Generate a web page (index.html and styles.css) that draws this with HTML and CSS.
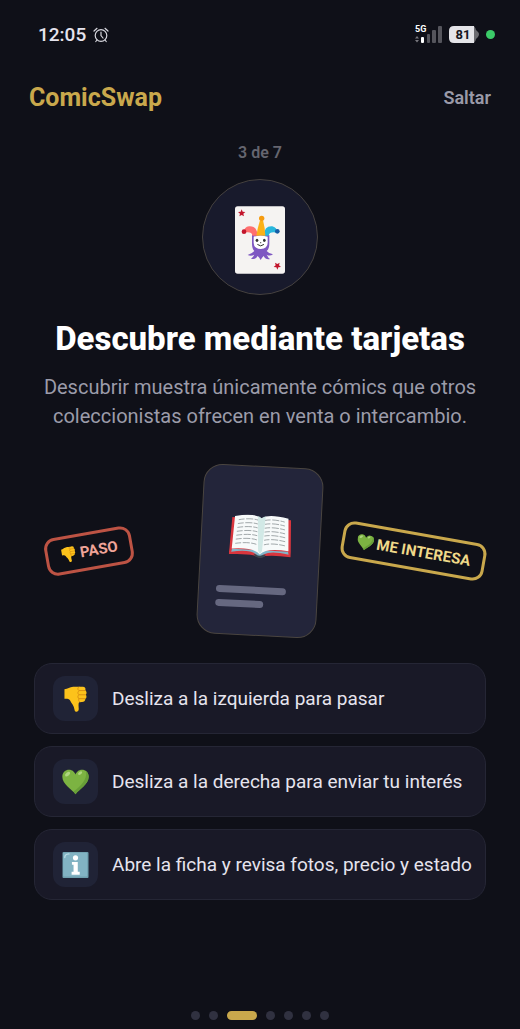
FILE: index.html
```html
<!DOCTYPE html>
<html lang="es">
<head>
    <meta charset="UTF-8">
    <meta name="viewport" content="width=device-width, initial-scale=1.0">
    <title>ComicSwap</title>
    <link rel="stylesheet" href="styles.css">
</head>
<body>
    <!-- shared icons -->
    <svg class="sprite" aria-hidden="true">
        <symbol id="thumb-down" viewBox="0 0 70 80">
            <path fill="#fcc21b" d="M1 10 C12 9 16 3 28 2 L58 2 C65 3 67 8 65 13 C70 17 70 23 67 27 C70 32 69 37 65 39 C66 45 62 49 55 49 L46 50 C43 56 45 65 45 71 C45 81 33 82 32 73 C31 61 22 53 18 44 C14 38 8 39 1 39 Z"/>
            <path fill="none" stroke="#d99012" stroke-width="3" stroke-linecap="round" d="M47 14 H64 M46 27 H66 M46 39 H64 M45 3 C40 8 42 13 47 14 C41 17 41 24 46 27 C41 30 41 37 46 39 C43 43 45 48 48 49"/>
        </symbol>
        <symbol id="heart" viewBox="0 0 82 76">
            <path fill="#7cb342" d="M41 75 C30 60 1 45 1 22 C1 8 11 1 21 1 C32 1 38 8 41 15 C44 8 50 1 61 1 C71 1 81 8 81 22 C81 45 52 60 41 75 Z"/>
            <path fill="#689f38" d="M41 75 C52 60 81 45 81 22 C81 15 78 8 73 5 C77 32 57 49 35 67 Z"/>
            <ellipse cx="17" cy="14" rx="9" ry="5" fill="#aed581" transform="rotate(-38 17 14)"/>
            <ellipse cx="55" cy="11" rx="7" ry="4" fill="#aed581" transform="rotate(-35 55 11)"/>
        </symbol>
    </svg>

    <div class="status-bar">
        <div class="status-left">
            <span class="clock">12:05</span>
            <svg class="alarm" viewBox="0 0 16 16" fill="none" stroke="#d5d5dc" stroke-width="1.2" stroke-linecap="round">
                <circle cx="8" cy="8.500" r="5.800"/>
                <path d="M8 5 V8.500 L10 11 M1 4 L4 1.300 M15 4 L12 1.300 M4 13 L2.800 14.500 M12 13 L13.200 14.500"/>
            </svg>
        </div>
        <div class="status-right">
            <div class="signal">
                <span class="network">5G</span>
                <svg viewBox="0 0 27 17">
                    <path fill="#77777d" d="M0 12.500 L2 10 L4 12.500 Z M0 14 L2 16.500 L4 14 Z"/>
                    <rect x="6" y="11" width="3" height="6" rx="1" fill="#fff"/>
                    <rect x="12" y="8" width="3" height="9" rx="1" fill="#55555c"/>
                    <rect x="17" y="4" width="4" height="13" rx="1" fill="#55555c"/>
                    <rect x="23" y="0" width="4" height="17" rx="1" fill="#55555c"/>
                </svg>
            </div>
            <div class="battery">
                <svg viewBox="0 0 30 17">
                    <path fill="#6b6b70" d="M22 0 H24 Q26 0 27 4 L29 6 Q31 8 29 11 L27 13 Q26 17 24 17 H22 Z"/>
                    <path fill="#e4e4e8" d="M5 0 H25 V17 H5 Q0 17 0 12 V5 Q0 0 5 0 Z"/>
                </svg>
                <span>81</span>
            </div>
            <span class="active-dot"></span>
        </div>
    </div>

    <header>
        <span class="logo">ComicSwap</span>
        <button type="button" class="skip">Saltar</button>
    </header>

    <main>
        <p class="counter">3 de 7</p>

        <div class="hero">
            <svg class="joker" viewBox="0 0 150 202">
                <rect width="150" height="202" rx="8" fill="#f5f3f2"/>
                <path fill="#c2152c" d="M20 9 L23 16 L31 17 L25 22 L27 30 L20 26 L13 30 L15 22 L9 17 L17 16 Z"/>
                <path fill="#c2152c" d="M127 190 L124 183 L116 182 L122 177 L120 169 L127 173 L134 169 L132 177 L138 182 L130 183 Z"/>
                <path fill="#7e57c2" d="M51 86 H103 V112 Q103 127 95 134 Q103 143 114 144 Q104 151 95 145 Q100 155 105 158 Q92 161 86 149 Q81 154 77 161 Q73 154 68 149 Q62 161 48 157 Q55 152 58 145 Q48 151 38 146 Q51 142 58 134 Q51 127 51 112 Z"/>
                <path fill="#ff6f6f" d="M52 88 Q51 75 28 79 Q25 63 42 60 Q66 58 68 88 Z"/>
                <path fill="#29b6dc" d="M101 88 Q103 75 125 79 Q128 64 112 60 Q88 58 86 88 Z"/>
                <path fill="#fbb117" d="M64 88 Q68 64 75 42 H84 Q90 64 91 88 Z"/>
                <circle cx="80" cy="36" r="8" fill="#f59b10"/>
                <circle cx="27" cy="76" r="7" fill="#c2152c"/>
                <circle cx="127" cy="75" r="7" fill="#145ca5"/>
                <path fill="#fff" d="M56 91 Q77 85 98 91 V109 Q98 127 77 128 Q56 127 56 109 Z"/>
                <ellipse cx="66" cy="102" rx="4" ry="5" fill="#333"/>
                <ellipse cx="88" cy="102" rx="4" ry="5" fill="#333"/>
                <path d="M68 115 Q77 123 86 115" fill="none" stroke="#333" stroke-width="3" stroke-linecap="round"/>
                <circle cx="77" cy="109" r="2" fill="#555"/>
            </svg>
        </div>

        <h1>Descubre mediante tarjetas</h1>
        <p class="intro">Descubrir muestra únicamente cómics que otros coleccionistas ofrecen en venta o intercambio.</p>

        <div class="swipe">
            <div class="tag tag-pass">
                <svg><use href="#thumb-down"/></svg>
                <span>PASO</span>
            </div>
            <div class="comic">
                <svg class="book" viewBox="0 0 190 130">
                    <path fill="#d9363e" d="M5 10 H185 L190 124 Q140 119 112 124 Q95 134 78 124 Q50 119 0 124 Z"/>
                    <path fill="#37474f" d="M76 120 H114 L108 127 Q95 134 82 127 Z"/>
                    <path fill="#82b5c9" d="M9 107 H181 L183 116 Q128 106 108 119 Q95 129 82 119 Q62 106 7 116 Z"/>
                    <path fill="#f7fafa" d="M13 6 Q75 -7 95 9 Q115 -7 177 6 L182 106 Q115 98 95 120 Q75 98 8 106 Z"/>
                    <path fill="#b9ded8" d="M83 3 Q91 4 95 10 Q99 4 107 3 L101 109 L95 119 L89 109 Z" opacity=".6"/>
                    <g fill="none" stroke="#777f82" stroke-width="2" stroke-dasharray="17 5 22 4">
                        <path d="M25 17 Q60 9 84 15"/>
                        <path d="M23 29 Q59 21 84 27"/>
                        <path d="M22 41 Q59 33 84 39"/>
                        <path d="M21 53 Q59 45 84 51"/>
                        <path d="M20 65 Q59 57 84 63"/>
                        <path d="M19 77 Q59 69 84 76"/>
                        <path d="M18 90 Q59 82 84 90"/>
                        <path d="M106 15 Q131 9 166 17"/>
                        <path d="M106 27 Q131 21 167 29"/>
                        <path d="M106 39 Q131 33 168 41"/>
                        <path d="M106 51 Q131 45 169 53"/>
                        <path d="M106 63 Q131 57 170 65"/>
                        <path d="M106 76 Q131 69 171 77"/>
                        <path d="M106 90 Q131 82 172 90"/>
                    </g>
                </svg>
                <span class="line"></span>
                <span class="line line-short"></span>
            </div>
            <div class="tag tag-like">
                <svg><use href="#heart"/></svg>
                <span>ME INTERESA</span>
            </div>
        </div>

        <ul class="steps">
            <li>
                <span class="step-icon"><svg><use href="#thumb-down"/></svg></span>
                <span>Desliza a la izquierda para pasar</span>
            </li>
            <li>
                <span class="step-icon"><svg><use href="#heart"/></svg></span>
                <span>Desliza a la derecha para enviar tu interés</span>
            </li>
            <li>
                <span class="step-icon">
                    <svg viewBox="0 0 80 80">
                        <rect width="80" height="80" rx="3" fill="#6f9fae"/>
                        <rect x="2" y="2" width="74" height="73" rx="3" fill="#82b3c3"/>
                        <path d="M7 17 Q7 7 20 6" fill="none" stroke="#b9dce6" stroke-width="4" stroke-linecap="round"/>
                        <circle cx="40" cy="18" r="8" fill="#fff"/>
                        <path fill="#fff" d="M29 31 H47 V61 H53 V70 H28 V61 H34 V39 H29 Z"/>
                    </svg>
                </span>
                <span>Abre la ficha y revisa fotos, precio y estado</span>
            </li>
        </ul>
    </main>

    <footer class="dots">
        <span></span>
        <span></span>
        <span class="current"></span>
        <span></span>
        <span></span>
        <span></span>
        <span></span>
    </footer>
</body>
</html>
```
FILE: styles.css
```css
* {
    box-sizing: border-box;
}
body {
    margin: 0;
    min-height: 100vh;
    display: flex;
    flex-direction: column;
    font-family: Roboto, sans-serif;
    background-color: #0f1018;
    color: #e6e4ee;
}
h1, p, ul {
    margin: 0;
    padding: 0;
}
svg {
    display: block;
}
.sprite {
    position: absolute;
    width: 0;
    height: 0;
}

/* status bar */
.status-bar {
    display: flex;
    justify-content: space-between;
    align-items: center;
    height: 69px;
    padding: 0 25px 0 38px;
}
.status-left, .status-right {
    display: flex;
    align-items: center;
    gap: 7px;
}
.clock {
    font-size: 19px;
    font-weight: 500;
}
.alarm {
    width: 16px;
    height: 16px;
}
.signal {
    position: relative;
}
.signal svg {
    width: 27px;
    height: 17px;
}
.network {
    position: absolute;
    top: -2px;
    left: 0;
    font-size: 9px;
    font-weight: 700;
    line-height: 10px;
    color: #fff;
}
.battery {
    position: relative;
}
.battery svg {
    width: 30px;
    height: 17px;
}
.battery span {
    position: absolute;
    inset: 0 2px 0 0;
    font-size: 13px;
    font-weight: 700;
    line-height: 17px;
    text-align: center;
    color: #15151d;
}
.active-dot {
    width: 9px;
    height: 9px;
    border-radius: 50%;
    background-color: #3bcb68;
}

header {
    display: flex;
    justify-content: space-between;
    align-items: center;
    height: 56px;
    padding: 0 29px;
}
.logo {
    font-size: 25px;
    font-weight: 700;
    color: #c9a84c;
}
.skip {
    padding: 0;
    border: none;
    background: none;
    font-family: inherit;
    font-size: 18px;
    font-weight: 600;
    color: #9a9aa8;
    cursor: pointer;
}

main {
    display: flex;
    flex-direction: column;
    align-items: center;
    padding: 18px 34px 0;
}
.counter {
    font-size: 16px;
    font-weight: 600;
    line-height: 20px;
    color: #65656f;
}
.hero {
    display: flex;
    justify-content: center;
    align-items: center;
    width: 116px;
    height: 116px;
    margin-top: 16px;
    padding-top: 6px;
    border: 1px solid #45413f;
    border-radius: 50%;
    background-color: #181a2c;
}
.joker {
    width: 50px;
    height: 68px;
}
h1 {
    margin-top: 24px;
    font-size: 33px;
    font-weight: 800;
    line-height: 40px;
    text-align: center;
    color: #fff;
}
.intro {
    margin-top: 14px;
    font-size: 20px;
    line-height: 29px;
    text-align: center;
    color: #9c9caa;
}

/* swipe demo */
.swipe {
    display: grid;
    grid-template-columns: 1fr auto 1fr;
    align-items: center;
    width: 100%;
    margin-top: 35px;
}
.comic {
    display: flex;
    flex-direction: column;
    gap: 7px;
    width: 120px;
    height: 170px;
    padding: 48px 17px 0;
    border: 1px solid #4a4540;
    border-radius: 19px;
    background-color: #23253a;
    transform: rotate(3deg);
}
.book {
    align-self: center;
    width: 62px;
    height: 43px;
    margin-bottom: 22px;
}
.line {
    width: 70px;
    height: 7px;
    border-radius: 4px;
    background-color: #666880;
}
.line-short {
    width: 48px;
}
.tag {
    display: flex;
    align-items: center;
    gap: 3px;
    height: 38px;
    padding: 0 12px;
    border: 3px solid;
    border-radius: 11px;
    font-size: 15px;
    font-weight: 700;
    white-space: nowrap;
}
.tag svg {
    width: 17px;
    height: 16px;
}
.tag-pass {
    justify-self: start;
    margin-left: 11px;
    border-color: #bd5344;
    color: #f0a498;
    transform: rotate(-10deg);
}
.tag-like {
    justify-self: end;
    border-color: #c9a84c;
    color: #f0d98a;
    transform: rotate(10deg);
}

.steps {
    display: flex;
    flex-direction: column;
    gap: 12px;
    width: 100%;
    margin-top: 27px;
    list-style: none;
}
.steps li {
    display: flex;
    align-items: center;
    gap: 14px;
    padding: 12px 10px 12px 18px;
    border: 1px solid #252635;
    border-radius: 18px;
    background-color: #191927;
    font-size: 19px;
}
.step-icon {
    display: flex;
    flex-shrink: 0;
    justify-content: center;
    align-items: center;
    width: 45px;
    height: 45px;
    border-radius: 12px;
    background-color: #202336;
}
.step-icon svg {
    width: 27px;
    height: 26px;
}

.dots {
    display: flex;
    justify-content: center;
    gap: 9px;
    margin-top: auto;
    padding: 20px 0 9px;
}
.dots span {
    width: 9px;
    height: 9px;
    border-radius: 5px;
    background-color: #303140;
}
.dots .current {
    width: 30px;
    background-color: #c9a84c;
}
```
